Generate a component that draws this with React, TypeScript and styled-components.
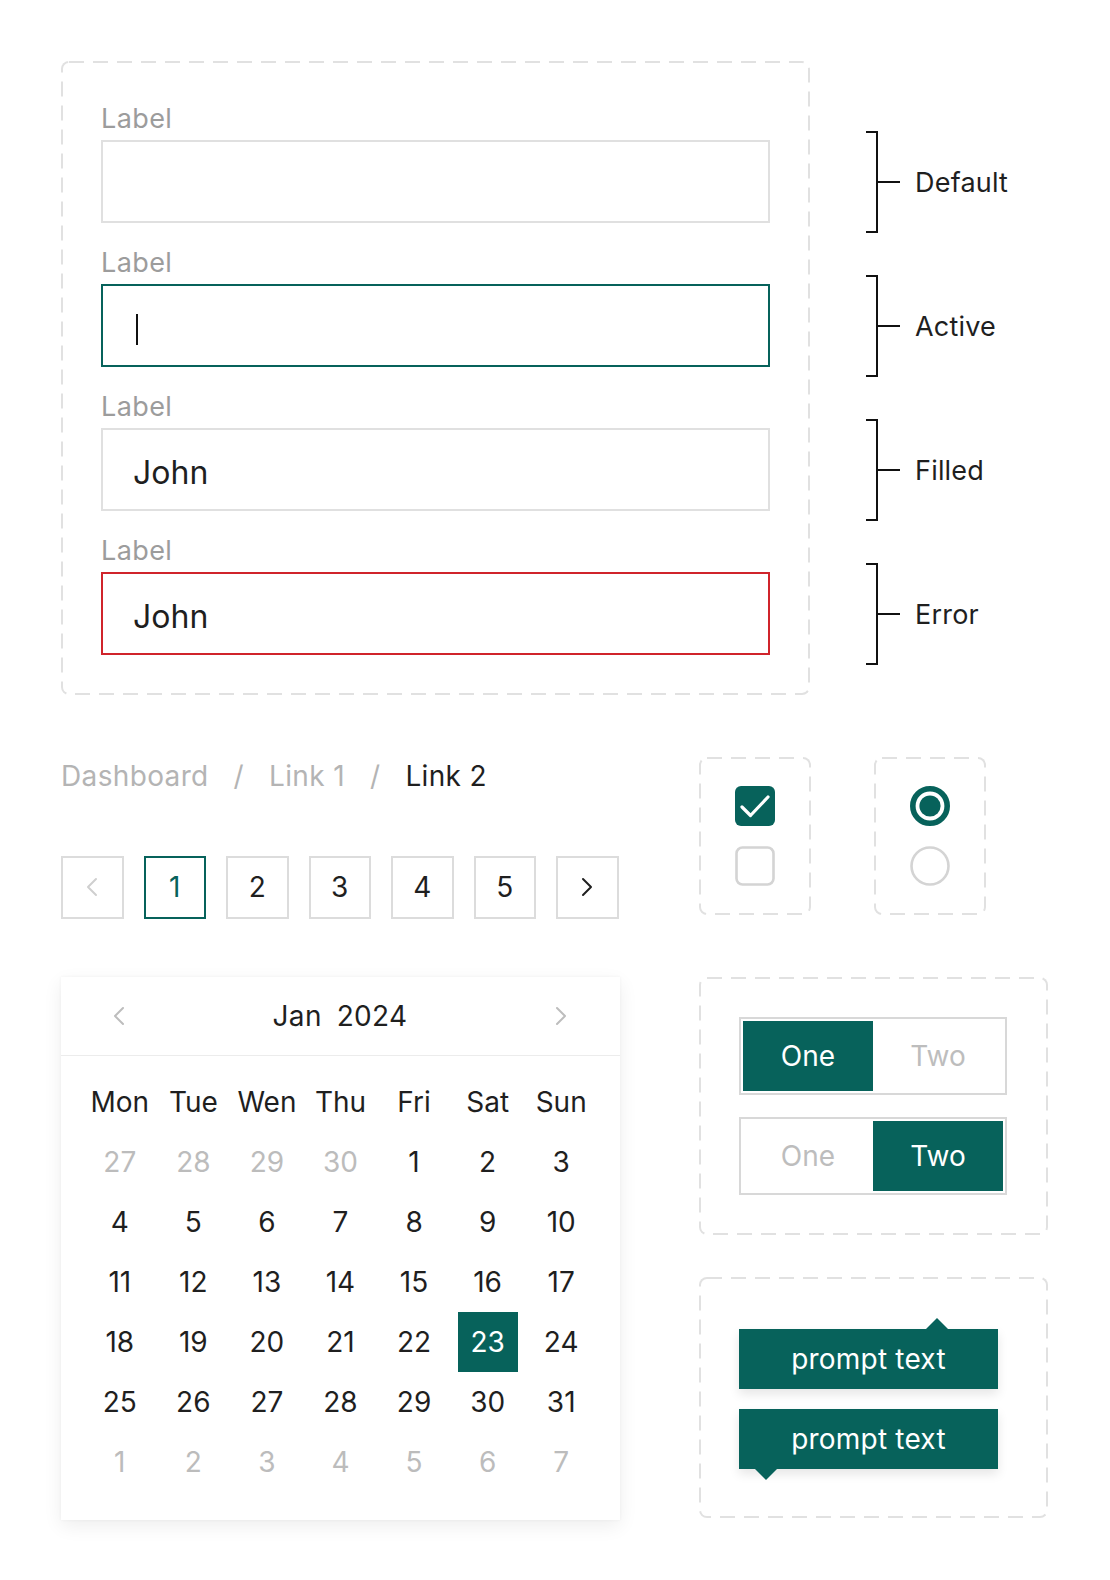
import React from 'react';
import styled, { createGlobalStyle, css } from 'styled-components';

const TEAL = '#07625b';
const RED = '#d0242b';
const INK = '#1f1f1f';
const LINE = '#dcdcdc';

const dashedSvg = (radius: number, dash: string) =>
    `url("data:image/svg+xml,${encodeURIComponent(
        `<svg xmlns='http://www.w3.org/2000/svg' width='100%' height='100%'><rect width='100%' height='100%' fill='none' rx='${radius}' ry='${radius}' stroke='#e1e1e1' stroke-width='4' stroke-dasharray='${dash}'/></svg>`,
    )}")`;

const GlobalStyle = createGlobalStyle`
    * {
        box-sizing: border-box;
    }
    body {
        margin: 0;
        background: #fff;
        color: ${INK};
        font-family: Inter, "Liberation Sans", sans-serif;
    }
`;

const Page = styled.div`
    width: 1110px;
    min-height: 1580px;
    padding: 61px 0 0 61px;
`;

const TopSection = styled.section`
    display: flex;
    align-items: flex-start;
`;

const DashedPanel = styled.div`
    background-image: ${dashedSvg(8, '15 9')};
    border-radius: 8px;
`;

const FormPanel = styled(DashedPanel)`
    width: 749px;
    padding: 42px 40px 40px;
    display: flex;
    flex-direction: column;
    gap: 24px;
`;

const Field = styled.div`
    display: flex;
    flex-direction: column;
`;

const Label = styled.label`
    font-size: 27px;
    line-height: 32px;
    color: #9c9c9c;
    margin-bottom: 5px;
    letter-spacing: 0.4px;
`;

type InputState = 'default' | 'active' | 'filled' | 'error';

const borderFor = (state: InputState) => {
    if (state === 'active') return TEAL;
    if (state === 'error') return RED;
    return '#e0e0e0';
};

const InputBox = styled.div<{ $state: InputState }>`
    height: 83px;
    border: 2px solid ${(p) => borderFor(p.$state)};
    padding: 5px 30px 0;
    display: flex;
    align-items: center;
    font-size: 32px;
    color: ${INK};
`;

const Caret = styled.span`
    width: 2px;
    height: 31px;
    margin-left: 3px;
    margin-top: 2px;
    background: #111;
`;

const BracketColumn = styled.div`
    margin-left: 56px;
    padding-top: 70px;
    display: flex;
    flex-direction: column;
    gap: 42px;
`;

const BracketRow = styled.div`
    display: flex;
    align-items: center;
    height: 102px;
`;

const Bracket = styled.span`
    position: relative;
    width: 12px;
    height: 102px;
    border: 2px solid #111;
    border-left: none;
    &::after {
        content: '';
        position: absolute;
        left: 100%;
        top: 50%;
        width: 24px;
        height: 2px;
        margin-top: -1px;
        background: #111;
    }
`;

const BracketText = styled.span`
    margin-left: 37px;
    font-size: 27px;
    color: ${INK};
    letter-spacing: 0.2px;
`;

const BottomSection = styled.section`
    margin-top: 62px;
    display: flex;
    gap: 80px;
    align-items: flex-start;
`;

const LeftColumn = styled.div`
    width: 558px;
    display: flex;
    flex-direction: column;
`;

const RightColumn = styled.div`
    width: 349px;
    display: flex;
    flex-direction: column;
`;

const Breadcrumb = styled.nav`
    display: flex;
    align-items: center;
    gap: 25px;
    height: 38px;
    font-size: 28px;
    line-height: 38px;
`;

const Crumb = styled.span<{ $current?: boolean }>`
    color: ${(p) => (p.$current ? INK : '#b4b4b4')};
    letter-spacing: 0.35px;
`;

const Pagination = styled.div`
    margin-top: 61px;
    display: flex;
    gap: 20px;
`;

const PageButton = styled.button<{ $active?: boolean }>`
    width: 62.5px;
    height: 62.5px;
    padding: 0;
    border: 2px solid ${(p) => (p.$active ? TEAL : LINE)};
    background: #fff;
    color: ${(p) => (p.$active ? TEAL : INK)};
    font-family: inherit;
    font-size: 28px;
    display: flex;
    align-items: center;
    justify-content: center;
`;

const Calendar = styled.div`
    margin-top: 58px;
    width: 559px;
    background: #fff;
    box-shadow: 0 6px 18px rgba(0, 0, 0, 0.07), 0 0 3px rgba(0, 0, 0, 0.05);
`;

const CalendarHeader = styled.div`
    height: 79px;
    padding: 1px 52px 0 51px;
    display: flex;
    align-items: center;
    justify-content: space-between;
    border-bottom: 1px solid #ececec;
`;

const MonthTitle = styled.div`
    display: flex;
    gap: 15px;
    font-size: 28px;
    color: ${INK};
    letter-spacing: 0.3px;
`;

const CalendarBody = styled.div`
    padding: 16px 22px 28px;
    display: grid;
    grid-template-columns: repeat(7, 1fr);
    grid-auto-rows: 60px;
`;

const WeekDay = styled.div`
    display: flex;
    align-items: center;
    justify-content: center;
    font-size: 28px;
    color: ${INK};
`;

const DayCell = styled.div<{ $muted?: boolean; $selected?: boolean }>`
    justify-self: center;
    width: 60px;
    height: 60px;
    display: flex;
    align-items: center;
    justify-content: center;
    font-size: 28px;
    color: ${(p) => (p.$muted ? '#bcbcbc' : INK)};
    ${(p) =>
        p.$selected &&
        css`
            background: ${TEAL};
            color: #fff;
        `}
`;

const ChoiceRow = styled.div`
    display: flex;
    gap: 63px;
`;

const ChoicePanel = styled(DashedPanel)`
    width: 112px;
    height: 158px;
    display: flex;
    flex-direction: column;
    align-items: center;
    justify-content: center;
    gap: 20px;
`;

const TogglePanel = styled(DashedPanel)`
    margin-top: 62px;
    padding: 40px;
    display: flex;
    flex-direction: column;
    gap: 22px;
`;

const Segmented = styled.div`
    width: 268px;
    height: 78px;
    border: 2px solid #d8d8d8;
    padding: 2px;
    display: flex;
`;

const Segment = styled.div<{ $active?: boolean }>`
    flex: 1;
    display: flex;
    align-items: center;
    justify-content: center;
    font-size: 28px;
    background: ${(p) => (p.$active ? TEAL : '#fff')};
    color: ${(p) => (p.$active ? '#fff' : '#bdbdbd')};
`;

const TooltipPanel = styled(DashedPanel)`
    margin-top: 42px;
    padding: 52px 40px 49px;
    display: flex;
    flex-direction: column;
    gap: 20px;
`;

const Tooltip = styled.div<{ $arrow: 'top' | 'bottom' }>`
    position: relative;
    width: 259px;
    height: 60px;
    background: ${TEAL};
    color: #fff;
    font-size: 28px;
    letter-spacing: 0.2px;
    display: flex;
    align-items: center;
    justify-content: center;
    box-shadow: 0 5px 10px rgba(0, 0, 0, 0.1);
    &::before {
        content: '';
        position: absolute;
        width: 0;
        height: 0;
        border-left: 11px solid transparent;
        border-right: 11px solid transparent;
        ${(p) =>
            p.$arrow === 'top'
                ? css`
                      bottom: 100%;
                      right: 50px;
                      border-bottom: 11px solid ${TEAL};
                  `
                : css`
                      top: 100%;
                      left: 16px;
                      border-top: 11px solid ${TEAL};
                  `}
    }
`;

const Chevron = ({ dir, color }: { dir: 'left' | 'right'; color: string }) => (
    <svg width="14" height="20" viewBox="0 0 14 20" fill="none">
        <path
            d={dir === 'left' ? 'M11 2 L3 10 L11 18' : 'M3 2 L11 10 L3 18'}
            stroke={color}
            strokeWidth="2"
            strokeLinecap="round"
            strokeLinejoin="round"
        />
    </svg>
);

const CheckBox = ({ checked }: { checked?: boolean }) => (
    <svg width="40" height="40" viewBox="0 0 40 40">
        {checked ? (
            <>
                <rect width="40" height="40" rx="6" fill={TEAL} />
                <path d="M7 21 L15.5 29.5 L33 11" stroke="#fff" strokeWidth="3.2" fill="none" strokeLinecap="round" strokeLinejoin="round" />
            </>
        ) : (
            <rect x="1.5" y="1.5" width="37" height="37" rx="6" fill="#fff" stroke="#d4d4d4" strokeWidth="2.6" />
        )}
    </svg>
);

const RadioDot = ({ checked }: { checked?: boolean }) => (
    <svg width="40" height="40" viewBox="0 0 40 40">
        {checked ? (
            <>
                <circle cx="20" cy="20" r="17.2" fill="#fff" stroke={TEAL} strokeWidth="5.6" />
                <circle cx="20" cy="20" r="10.6" fill={TEAL} />
            </>
        ) : (
            <circle cx="20" cy="20" r="18.5" fill="#fff" stroke="#d4d4d4" strokeWidth="2.6" />
        )}
    </svg>
);

const fields: { state: InputState; value?: string; tag: string }[] = [
    { state: 'default', tag: 'Default' },
    { state: 'active', tag: 'Active' },
    { state: 'filled', value: 'John', tag: 'Filled' },
    { state: 'error', value: 'John', tag: 'Error' },
];

const weekDays = ['Mon', 'Tue', 'Wen', 'Thu', 'Fri', 'Sat', 'Sun'];

const days: { n: number; muted?: boolean }[] = [
    ...[27, 28, 29, 30].map((n) => ({ n, muted: true })),
    ...Array.from({ length: 31 }, (_, i) => ({ n: i + 1 })),
    ...[1, 2, 3, 4, 5, 6, 7].map((n) => ({ n, muted: true })),
];

function App() {
    return (
        <Page>
            <GlobalStyle />
            <TopSection>
                <FormPanel>
                    {fields.map((f) => (
                        <Field key={f.tag}>
                            <Label>Label</Label>
                            <InputBox $state={f.state}>
                                {f.state === 'active' ? <Caret /> : f.value}
                            </InputBox>
                        </Field>
                    ))}
                </FormPanel>
                <BracketColumn>
                    {fields.map((f) => (
                        <BracketRow key={f.tag}>
                            <Bracket />
                            <BracketText>{f.tag}</BracketText>
                        </BracketRow>
                    ))}
                </BracketColumn>
            </TopSection>

            <BottomSection>
                <LeftColumn>
                    <Breadcrumb>
                        <Crumb>Dashboard</Crumb>
                        <Crumb>/</Crumb>
                        <Crumb>Link 1</Crumb>
                        <Crumb>/</Crumb>
                        <Crumb $current>Link 2</Crumb>
                    </Breadcrumb>

                    <Pagination>
                        <PageButton>
                            <Chevron dir="left" color="#cfcfcf" />
                        </PageButton>
                        {[1, 2, 3, 4, 5].map((n) => (
                            <PageButton key={n} $active={n === 1}>
                                {n}
                            </PageButton>
                        ))}
                        <PageButton>
                            <Chevron dir="right" color={INK} />
                        </PageButton>
                    </Pagination>

                    <Calendar>
                        <CalendarHeader>
                            <Chevron dir="left" color="#bdbdbd" />
                            <MonthTitle>
                                <span>Jan</span>
                                <span>2024</span>
                            </MonthTitle>
                            <Chevron dir="right" color="#bdbdbd" />
                        </CalendarHeader>
                        <CalendarBody>
                            {weekDays.map((d) => (
                                <WeekDay key={d}>{d}</WeekDay>
                            ))}
                            {days.map((d, i) => (
                                <DayCell
                                    key={i}
                                    $muted={d.muted}
                                    $selected={!d.muted && d.n === 23}
                                >
                                    {d.n}
                                </DayCell>
                            ))}
                        </CalendarBody>
                    </Calendar>
                </LeftColumn>

                <RightColumn>
                    <ChoiceRow>
                        <ChoicePanel>
                            <CheckBox checked />
                            <CheckBox />
                        </ChoicePanel>
                        <ChoicePanel>
                            <RadioDot checked />
                            <RadioDot />
                        </ChoicePanel>
                    </ChoiceRow>

                    <TogglePanel>
                        <Segmented>
                            <Segment $active>One</Segment>
                            <Segment>Two</Segment>
                        </Segmented>
                        <Segmented>
                            <Segment>One</Segment>
                            <Segment $active>Two</Segment>
                        </Segmented>
                    </TogglePanel>

                    <TooltipPanel>
                        <Tooltip $arrow="top">prompt text</Tooltip>
                        <Tooltip $arrow="bottom">prompt text</Tooltip>
                    </TooltipPanel>
                </RightColumn>
            </BottomSection>
        </Page>
    );
}

export default App;
